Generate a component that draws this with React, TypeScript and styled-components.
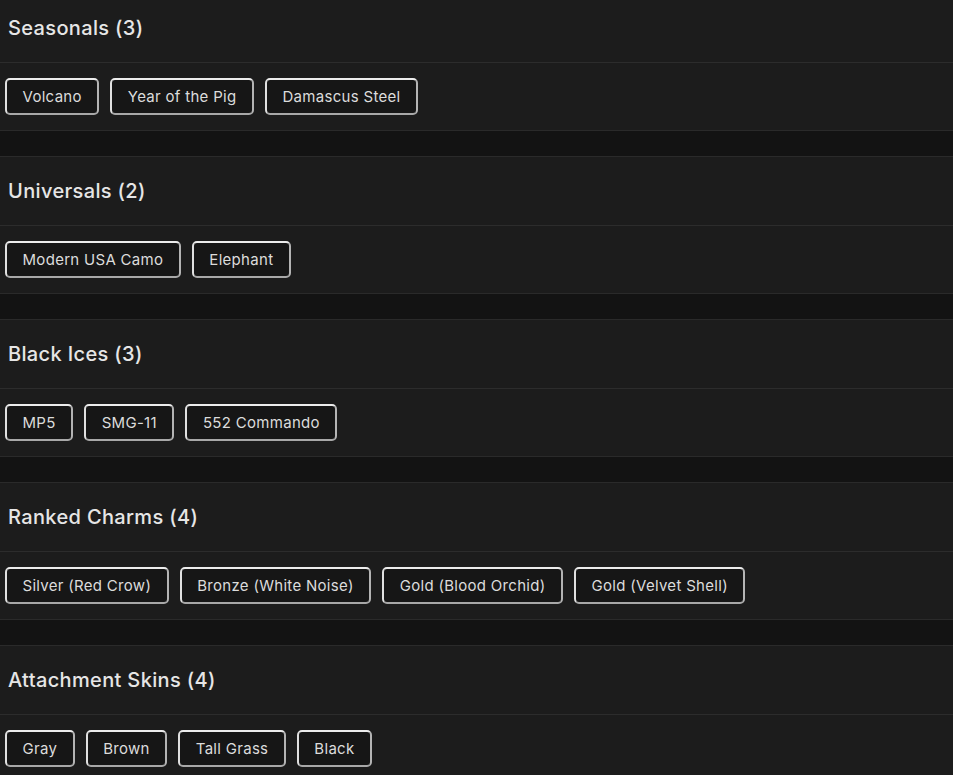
import React from "react";
import styled, { createGlobalStyle } from "styled-components";

const GlobalStyle = createGlobalStyle`
  html, body {
    margin: 0;
    padding: 0;
    background: #131313;
    overflow: hidden;
  }
  body {
    font-family: "Inter", "Noto Sans", sans-serif;
    color: #e4e4e4;
  }
`;

const Page = styled.div`
  display: flex;
  flex-direction: column;
  gap: 25px;
  margin-top: -7px;
  width: 953px;
`;

const Card = styled.section`
  background: #1c1c1c;
  border-top: 1px solid #2a2a2a;
  border-bottom: 1px solid #2a2a2a;
`;

const Header = styled.div`
  height: 68px;
  display: flex;
  align-items: center;
  padding-left: 8px;
  border-bottom: 1px solid #2c2c2c;
`;

const Title = styled.h2`
  margin: 0;
  font-size: 20px;
  font-weight: 500;
  letter-spacing: 0.35px;
  color: #e6e6e6;
`;

const Body = styled.div`
  height: 67px;
  display: flex;
  align-items: center;
  gap: 11px;
  padding-left: 5px;
`;

const Chip = styled.button`
  height: 37px;
  padding: 0 15.5px;
  background: #161616;
  border: 2px solid;
  border-color: #ececec #b4b4b4 #a8a8a8 #e0e0e0;
  border-radius: 5px;
  color: #dcdcdc;
  font-family: inherit;
  font-size: 15px;
  font-weight: 400;
  letter-spacing: 0.3px;
  cursor: pointer;
  white-space: nowrap;
`;

const sections: { title: string; items: string[] }[] = [
  { title: "Seasonals", items: ["Volcano", "Year of the Pig", "Damascus Steel"] },
  { title: "Universals", items: ["Modern USA Camo", "Elephant"] },
  { title: "Black Ices", items: ["MP5", "SMG-11", "552 Commando"] },
  {
    title: "Ranked Charms",
    items: ["Silver (Red Crow)", "Bronze (White Noise)", "Gold (Blood Orchid)", "Gold (Velvet Shell)"],
  },
  { title: "Attachment Skins", items: ["Gray", "Brown", "Tall Grass", "Black"] },
];

export default function App() {
  return (
    <>
      <GlobalStyle />
      <Page>
        {sections.map((s) => (
          <Card key={s.title}>
            <Header>
              <Title>
                {s.title} ({s.items.length})
              </Title>
            </Header>
            <Body>
              {s.items.map((item) => (
                <Chip key={item}>{item}</Chip>
              ))}
            </Body>
          </Card>
        ))}
      </Page>
    </>
  );
}
